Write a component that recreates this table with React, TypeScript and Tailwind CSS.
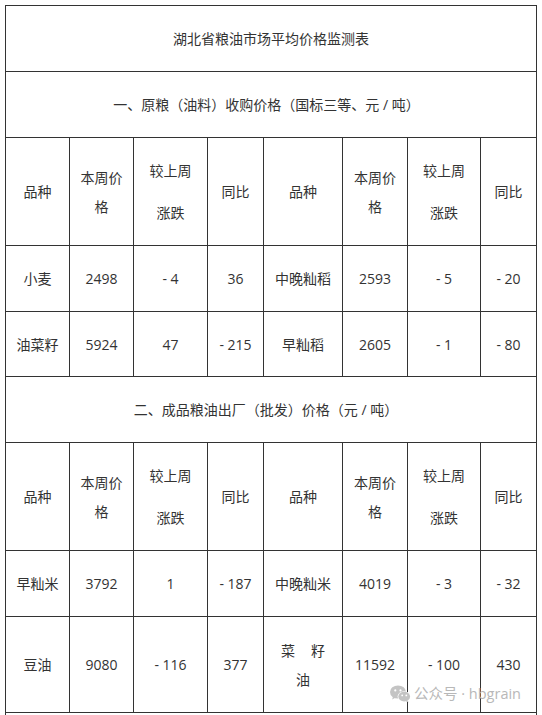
const line = "bg-white flex items-center justify-center text-center";

function Cell({ children, className = "" }: { children: React.ReactNode; className?: string }) {
  return <div className={`${line} ${className}`}>{children}</div>;
}

function HeaderRow() {
  const cells = (
    <>
      <Cell>品种</Cell>
      <Cell>
        <div className="leading-[29px]">
          本周价
          <br />格
        </div>
      </Cell>
      <Cell>
        <div className="leading-[42px]">
          较上周
          <br />
          涨跌
        </div>
      </Cell>
      <Cell>同比</Cell>
    </>
  );
  return (
    <>
      {cells}
      {cells}
    </>
  );
}

function DataRow({ row }: { row: React.ReactNode[] }) {
  return (
    <>
      {row.map((v, i) => (
        <Cell key={i}>{v}</Cell>
      ))}
    </>
  );
}

function WeChatIcon() {
  return (
    <svg width="21" height="18" viewBox="0 0 21 18">
      <ellipse cx="8" cy="7" rx="8" ry="6.6" fill="#c4c4c4" />
      <path d="M3 11.5 L2.2 14.5 L5.8 12.6 Z" fill="#c4c4c4" />
      <circle cx="5.3" cy="5.4" r="1.1" fill="#fff" />
      <circle cx="10.5" cy="5.4" r="1.1" fill="#fff" />
      <ellipse cx="14.2" cy="11.6" rx="6.6" ry="5.4" fill="#fff" />
      <ellipse cx="14.2" cy="11.6" rx="5.9" ry="4.9" fill="#c4c4c4" />
      <path d="M17.6 15.2 L18.8 17.6 L15.6 16.2 Z" fill="#c4c4c4" />
      <circle cx="12.2" cy="10.4" r="0.9" fill="#fff" />
      <circle cx="16.3" cy="10.4" r="0.9" fill="#fff" />
    </svg>
  );
}

export default function App() {
  return (
    <div
      className="relative h-[715px] overflow-hidden bg-white text-[14px] text-[#333]"
      style={{ fontFamily: '"Open Sans", "Noto Sans CJK SC", sans-serif' }}
    >
      <div className="ml-[5px] mt-[5px] w-[532px] border border-[#333] bg-[#333] grid gap-px grid-cols-[63px_63px_73px_55px_78px_64px_72px_55px] grid-rows-[65px_65px_107px_65px_64px_65px_107px_65px_95px_60px]">
        <Cell className="col-span-8">湖北省粮油市场平均价格监测表</Cell>
        <Cell className="col-span-8 pr-[9px]">一、原粮（油料）收购价格（国标三等、元 / 吨）</Cell>
        <HeaderRow />
        <DataRow row={["小麦", "2498", "- 4", "36", "中晚籼稻", "2593", "- 5", "- 20"]} />
        <DataRow row={["油菜籽", "5924", "47", "- 215", "早籼稻", "2605", "- 1", "- 80"]} />
        <Cell className="col-span-8 pr-[10px]">二、成品粮油出厂（批发）价格（元 / 吨）</Cell>
        <HeaderRow />
        <DataRow row={["早籼米", "3792", "1", "- 187", "中晚籼米", "4019", "- 3", "- 32"]} />
        <DataRow
          row={[
            "豆油",
            "9080",
            "- 116",
            "377",
            <div className="leading-[29px]">
              菜<span className="inline-block w-[16px]" />籽
              <br />油
            </div>,
            "11592",
            "- 100",
            "430",
          ]}
        />
        <Cell className="col-span-8">&nbsp;</Cell>
      </div>

      {/* watermark */}
      <div className="absolute left-[390px] top-[683px] flex items-center gap-[3px] text-[14.5px] text-[#b8b8b8]">
        <WeChatIcon />
        <span>公众号 · hbgrain</span>
      </div>
    </div>
  );
}
